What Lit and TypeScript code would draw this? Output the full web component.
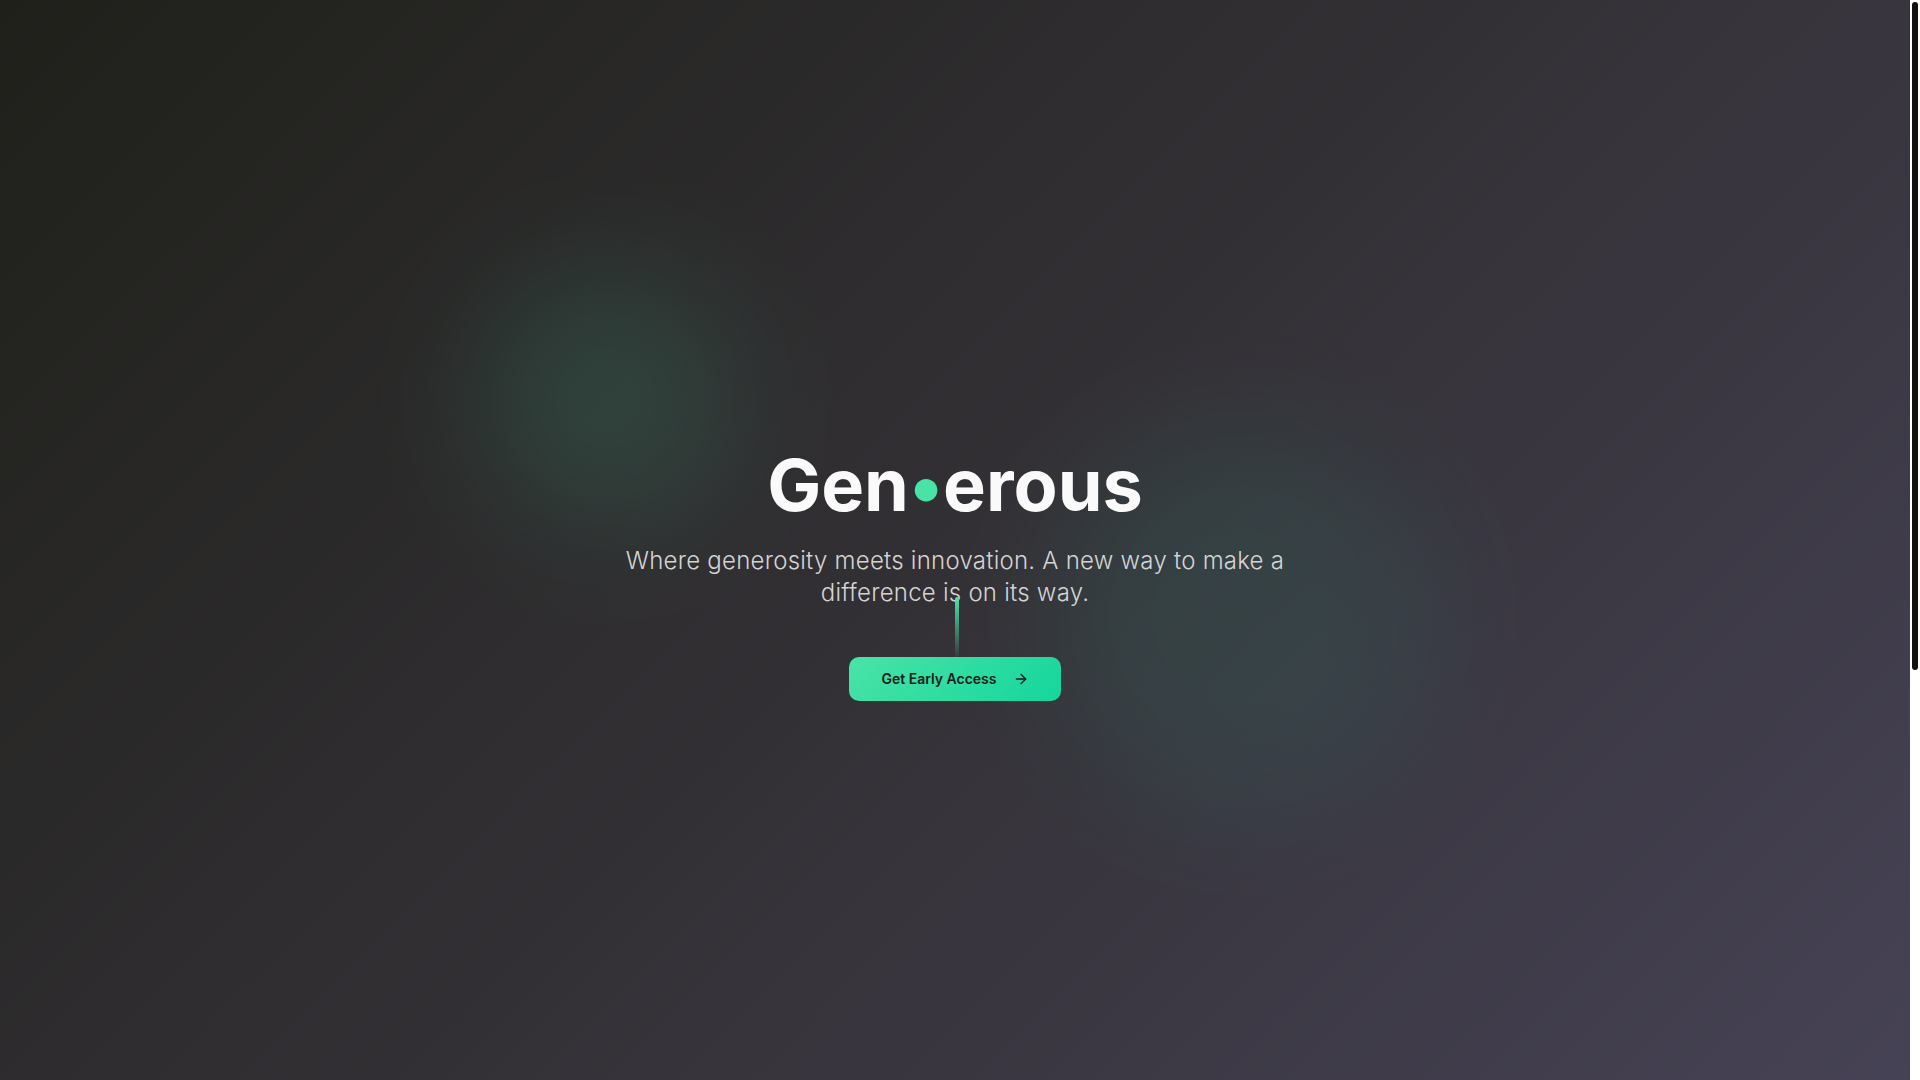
import { LitElement, html, css } from "lit";
import { customElement } from "lit/decorators.js";

@customElement("app-root")
export class AppRoot extends LitElement {
  static styles = css`
    :host {
      display: flex;
      min-height: 100vh;
      font-family: Inter, "Liberation Sans", sans-serif;
      background: #ffffff;
    }
    .hero {
      position: relative;
      flex: 1;
      display: flex;
      align-items: center;
      justify-content: center;
      box-sizing: border-box;
      padding: 70px 24px 0;
      overflow: hidden;
      background: linear-gradient(135deg, #1f201a 0%, #333035 50%, #464255 100%);
    }
    .glow {
      position: absolute;
      border-radius: 50%;
      filter: blur(64px);
    }
    .glow-start {
      top: 25%;
      left: 25%;
      width: 256px;
      height: 256px;
      background: #4ae3a7;
      opacity: 0.13;
    }
    .glow-end {
      right: 25%;
      bottom: 25%;
      width: 384px;
      height: 384px;
      background: #2fdca8;
      opacity: 0.08;
    }
    .content {
      position: relative;
      display: flex;
      flex-direction: column;
      align-items: center;
      max-width: 672px;
      text-align: center;
    }
    .title {
      margin: 0 0 24px;
      font-size: 72px;
      line-height: 72px;
      font-weight: 700;
      color: #fafafa;
    }
    .dot {
      color: #4ae3a7;
    }
    .tagline {
      margin: 0 0 48px;
      font-size: 24px;
      line-height: 32px;
      font-weight: 300;
      letter-spacing: 0.01em;
      color: #d4d4d4;
    }
    .beam {
      position: absolute;
      bottom: 40px;
      left: 50%;
      width: 4px;
      height: 64px;
      border-radius: 2px;
      background: linear-gradient(to bottom, #4ae3a7, transparent);
    }
    .cta {
      position: relative;
      display: flex;
      align-items: center;
      gap: 16px;
      height: 44px;
      padding: 0 32px;
      border: 0;
      border-radius: 10px;
      background: linear-gradient(135deg, #4ae3a7, #14d69c);
      color: #141c18;
      font: 600 14px/20px Inter, "Liberation Sans", sans-serif;
      cursor: pointer;
    }
    .arrow {
      width: 16px;
      height: 16px;
      fill: none;
      stroke: currentColor;
      stroke-width: 2;
      stroke-linecap: round;
      stroke-linejoin: round;
    }
    .scrollbar {
      box-sizing: border-box;
      width: 10px;
      padding: 2px;
      background: #ffffff;
    }
    .thumb {
      height: calc(62vh - 2px);
      border-radius: 3px;
      background: #111111;
    }
  `;

  render() {
    return html`
      <main class="hero">
        <div class="glow glow-start"></div>
        <div class="glow glow-end"></div>
        <div class="content">
          <h1 class="title">Gen<span class="dot">•</span>erous</h1>
          <p class="tagline">
            Where generosity meets innovation. A new way to make a difference is on its way.
          </p>
          <div class="beam"></div>
          <button class="cta" type="button">
            Get Early Access
            <svg class="arrow" viewBox="0 0 24 24" aria-hidden="true">
              <path d="M5 12h14" />
              <path d="m12 5 7 7-7 7" />
            </svg>
          </button>
        </div>
      </main>
      <div class="scrollbar" aria-hidden="true"><div class="thumb"></div></div>
    `;
  }
}
